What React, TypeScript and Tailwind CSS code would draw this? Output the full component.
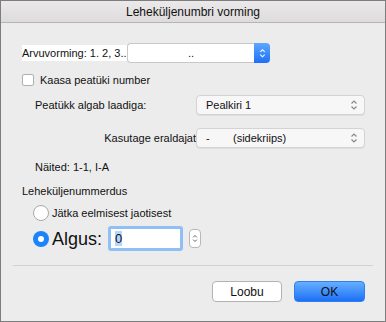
import type { ReactNode } from 'react'

function Chevrons({ color, size = 8 }: { color: string; size?: number }) {
  return (
    <svg width={size} height={size * 1.5} viewBox="0 0 8 12" fill="none" stroke={color} strokeWidth="1.2">
      <path d="M1.5 4.5 L4 2 L6.5 4.5" />
      <path d="M1.5 7.5 L4 10 L6.5 7.5" />
    </svg>
  )
}

function GraySelect({ children }: { children: ReactNode }) {
  return (
    <div className="flex h-[20px] w-[169px] items-center justify-between rounded-[4px] border border-[#d3d3d3] bg-[#f7f7f7] pl-[9px] pr-[6px] shadow-[0_1px_0_rgba(0,0,0,0.06)]">
      <div className="flex items-center text-[11px] text-[#111]">{children}</div>
      <Chevrons color="#8a8a8a" />
    </div>
  )
}

export default function App() {
  return (
    <div className="flex h-[322px] w-[386px] flex-col border border-[#7d7d7d] bg-[#ececec] font-['Liberation_Sans',Arial,sans-serif] text-[11px] text-[#111]">
      <div className="flex h-[22px] shrink-0 items-center justify-center border-b border-[#b5b5b5] bg-gradient-to-b from-[#ebe9e9] to-[#dddbdb] text-[12px] text-[#111]">
        Leheküljenumbri vorming
      </div>

      <div className="flex flex-col pl-[21px]">
        <div className="mt-[20px] flex h-[20px] items-center">
          <span className="w-[105px] bg-white">Arvuvorming: 1. 2, 3..</span>
          <div className="flex h-[20px] w-[143px] items-stretch">
            <div className="flex flex-1 items-center justify-center rounded-l-[4px] border border-r-0 border-[#c8c8c8] bg-white">..</div>
            <div className="flex w-[16px] items-center justify-center rounded-r-[4px] bg-gradient-to-b from-[#5ba8ff] to-[#1d6ff6]">
              <Chevrons color="#ffffff" size={7} />
            </div>
          </div>
        </div>

        <div className="mt-[10px] flex h-[14px] items-center gap-[6px]">
          <div className="h-[12px] w-[12px] rounded-[2px] border border-[#b0b0b0] bg-white" />
          <span>Kaasa peatüki number</span>
        </div>

        <div className="mt-[8px] flex h-[20px] items-center pl-[13px]">
          <span className="w-[161px]">Peatükk algab laadiga:</span>
          <GraySelect>Pealkiri 1</GraySelect>
        </div>

        <div className="mt-[13px] flex h-[20px] items-center pl-[13px]">
          <span className="w-[161px] pr-[0px] text-right">Kasutage eraldajat</span>
          <GraySelect>
            <span className="w-[27px]">-</span>
            <span>(sidekriips)</span>
          </GraySelect>
        </div>

        <div className="mt-[11px] flex h-[16px] items-center pl-[13px]">Näited: 1-1, I-A</div>

        <div className="mt-[8px] flex h-[16px] items-center">Leheküljenummerdus</div>

        <div className="mt-[6px] flex h-[16px] items-center gap-[3px] pl-[11px]">
          <div className="h-[16px] w-[16px] rounded-full border border-[#a9a9a9] bg-white" />
          <span>Jätka eelmisest jaotisest</span>
        </div>

        <div className="mt-[5px] flex h-[25px] items-center pl-[11px]">
          <div className="flex h-[16px] w-[16px] items-center justify-center rounded-full bg-[#1b84fb]">
            <div className="h-[6px] w-[6px] rounded-full bg-white" />
          </div>
          <span className="ml-[3px] text-[18px] leading-none">Algus:</span>
          <div className="ml-[6px] flex h-[25px] w-[75px] items-center rounded-[3px] border-[3px] border-[#8fbff5] bg-white pl-[4px]">
            <span className="bg-[#b4d6fb] text-[13px] leading-[15px]">0</span>
          </div>
          <div className="ml-[6px] flex h-[19px] w-[12px] items-center justify-center rounded-[4px] border border-[#b8b8b8] bg-white">
            <Chevrons color="#555" size={6} />
          </div>
        </div>
      </div>

      <div className="mx-[12px] mt-[14px] h-px bg-[#d2d2d2]" />

      <div className="mt-[15px] flex justify-end gap-[12px] pr-[20px]">
        <button className="flex h-[21px] w-[70px] items-center justify-center rounded-[4px] border border-[#b3b3b3] bg-white text-[12px] text-[#111]">
          Loobu
        </button>
        <button className="flex h-[21px] w-[71px] items-center justify-center rounded-[4px] border border-[#2f7ff0] bg-gradient-to-b from-[#65aeff] to-[#1c6ff6] text-[12px] text-[#111]">
          OK
        </button>
      </div>
    </div>
  )
}
